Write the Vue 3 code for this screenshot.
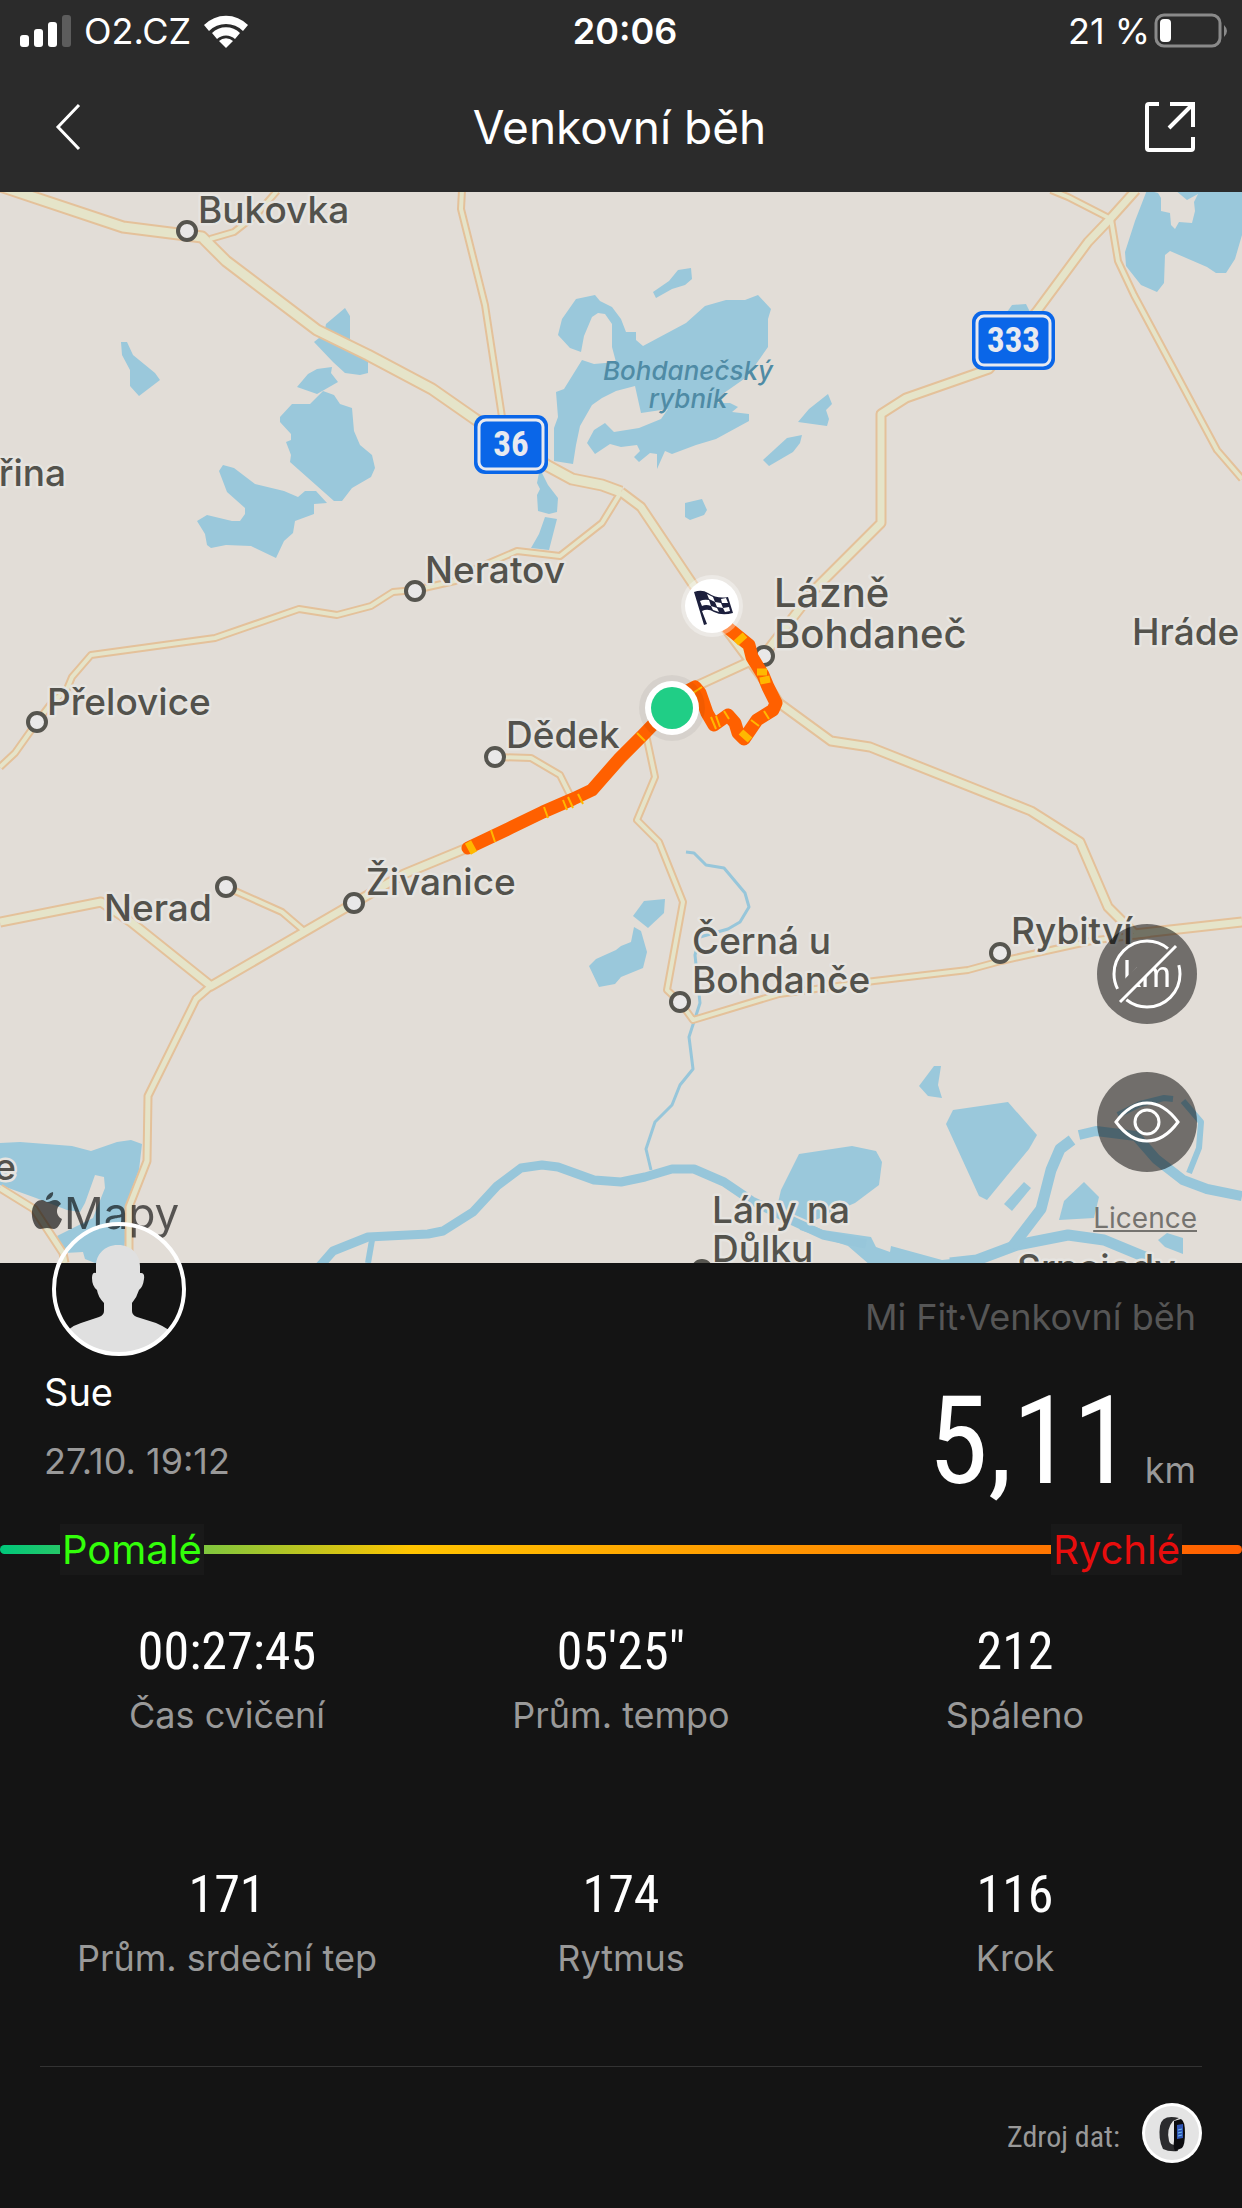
<template>
  <div class="workout">
    <header class="top">
      <div class="status">
        <div class="status__side">
          <svg
            class="signal"
            viewBox="0 0 52 34"
          >
            <rect x="0" y="21" width="9" height="12" rx="3" />
            <rect x="14" y="15" width="9" height="18" rx="3" />
            <rect x="28" y="8" width="9" height="25" rx="3" />
            <rect x="42" y="1" width="9" height="32" rx="3" class="signal__off" />
          </svg>
          <span>O2.CZ</span>
          <svg
            class="wifi"
            viewBox="0 0 46 34"
          >
            <path d="M1 11 A31 31 0 0 1 45 11 L40 17 A24 24 0 0 0 6 17 Z" />
            <path d="M9 19 A20 20 0 0 1 37 19 L32 25 A13 13 0 0 0 14 25 Z" />
            <path d="M16 27 A10 10 0 0 1 30 27 L23 34 Z" />
          </svg>
        </div>
        <strong class="status__time">20:06</strong>
        <div class="status__side status__side--right">
          <span>21 %</span>
          <svg
            class="battery"
            viewBox="0 0 76 36"
          >
            <rect x="2" y="2" width="64" height="31" rx="8" class="battery__case" />
            <rect x="6" y="6" width="11" height="23" rx="4" fill="#fff" />
            <path d="M70 12 q6 6 0 12 z" fill="#8a8a8a" />
          </svg>
        </div>
      </div>
      <nav class="nav">
        <button
          class="nav__button"
          aria-label="Zpět"
        >
          <svg viewBox="0 0 50 50">
            <path d="M35 3 L14 25 L35 47" />
          </svg>
        </button>
        <h1>Venkovní běh</h1>
        <button
          class="nav__button"
          aria-label="Sdílet"
        >
          <svg viewBox="0 0 50 50">
            <path
              d="M14 2 H4 Q2 2 2 4 V46 Q2 48 4 48 H46 Q48 48 48 46 V35 M25 2 H48 V25 M47 3 L24 26"
              stroke-width="4"
            />
          </svg>
        </button>
      </nav>
    </header>

    <section class="map">
      <svg
        class="map__canvas"
        viewBox="0 192 1242 1071"
      >
        <g class="water">
          <polygon
            v-for="points in lakes"
            :key="points"
            :points="points"
          />
        </g>
        <polyline
          v-for="river in rivers"
          :key="river.points"
          :points="river.points"
          :stroke-width="river.width"
          class="river"
        />
        <polyline
          v-for="road in roads"
          :key="'c' + road.points"
          :points="road.points"
          :stroke-width="road.width + 4"
          class="road road--casing"
        />
        <polyline
          v-for="road in roads"
          :key="'r' + road.points"
          :points="road.points"
          :stroke-width="road.width"
          class="road"
        />

        <circle
          v-for="[x, y] in towns"
          :key="x + '-' + y"
          :cx="x"
          :cy="y"
          r="9"
          class="town"
        />
        <text
          v-for="label in labels"
          :key="label.text"
          :x="label.x"
          :y="label.y"
          :class="['label', label.kind && 'label--' + label.kind]"
        >{{ label.text }}</text>

        <g
          v-for="shield in shields"
          :key="shield.text"
        >
          <rect :x="shield.x" :y="shield.y" :width="shield.width" height="59" rx="11" fill="#0a66e8" />
          <rect
            :x="shield.x + 5"
            :y="shield.y + 5"
            :width="shield.width - 10"
            height="49"
            rx="7"
            class="shield__line"
          />
          <text
            :x="shield.x + shield.width / 2"
            :y="shield.y + 41"
            class="shield__text"
          >{{ shield.text }}</text>
        </g>

        <polyline
          v-for="points in track"
          :key="points"
          :points="points"
          class="track"
        />
        <path
          d="M468 842 L474 853 M736 643 L745 635 M757 672 L767 672 M760 681 L770 679 M741 732 L750 740"
          class="track__slow"
        />
        <path
          d="M491 830 L495 842 M544 807 L548 818 M563 800 L567 810 M568 797 L573 808 M578 794 L583 804 M637 733 L645 741 M693 693 L702 687 M711 717 L716 729 M716 716 L720 727 M724 711 L729 719 M751 720 L759 726 M764 711 L769 719"
          class="track__slow track__slow--thin"
        />

        <circle cx="672" cy="708" r="33" fill="#000" opacity=".05" />
        <circle cx="672" cy="708" r="27" fill="#fff" />
        <circle cx="672" cy="708" r="21" fill="#20ce86" />

        <circle cx="712" cy="606" r="31" fill="#fff" opacity=".35" />
        <circle cx="712" cy="606" r="27" fill="#fff" />
        <g fill="#1c1f3c">
          <path d="M694 592 Q702 589 708 593 Q717 599 728 597 L733 613 Q722 616 714 612 Q708 608 702 611 L707 624 L704 625 Z" />
          <g fill="#fff">
            <path d="M707 594 L713 597 L715 602 L709 599 Z" />
            <path d="M700 601 Q704 599 709 600 L711 606 Q706 604 702 606 Z" />
            <path d="M715 602 L721 603 L723 608 L717 607 Z" />
            <path d="M721 599 L726 598 L728 603 L722 603 Z" />
            <path d="M711 606 L717 608 L719 612 L713 610 Z" />
            <path d="M723 608 L729 607 L730 611 L725 612 Z" />
          </g>
        </g>

        <g class="brand">
          <path d="M47 1202 C50 1202 52 1200 55 1200 C58 1200 60 1202 61 1204 C55 1208 56 1216 62 1219 C60 1225 57 1229 54 1229 C51 1229 50 1228 47 1228 C44 1228 43 1229 40 1229 C35 1229 31 1219 32 1211 C33 1203 38 1200 42 1200 C44 1200 46 1202 47 1202 Z M46 1200 C46 1196 49 1193 53 1192 C54 1196 50 1200 46 1200 Z" />
          <text x="64" y="1229">Mapy</text>
        </g>
      </svg>

      <div class="map__tools">
        <button
          class="tool"
          aria-label="Skrýt kilometry"
        >
          <svg viewBox="0 0 100 100">
            <mask id="slash">
              <rect width="100" height="100" fill="#fff" />
              <path d="M18 74 L75 17" stroke="#000" stroke-width="13" />
            </mask>
            <circle cx="50" cy="50" r="33" stroke-dasharray="90 14 90 20" stroke-dashoffset="16" />
            <g mask="url(#slash)">
              <text x="50" y="63">km</text>
            </g>
            <path d="M23 78 L79 22" />
          </svg>
        </button>
        <button
          class="tool"
          aria-label="Zobrazení mapy"
        >
          <svg viewBox="0 0 100 100">
            <path d="M19 50 Q33 31 50 31 Q67 31 81 50 Q67 69 50 69 Q33 69 19 50 Z" />
            <circle cx="50" cy="50" r="12" />
          </svg>
        </button>
        <a
          href="#"
          class="map__licence"
        >Licence</a>
      </div>
    </section>

    <section class="summary">
      <div class="summary__user">
        <svg
          class="avatar"
          viewBox="0 0 136 136"
        >
          <path
            d="M67 24 C81 24 89 34 89 45 V52 Q94 51 93 58 Q92 66 88 69 Q86 76 81 82 V90 Q81 94 86 96 L105 102 Q112 105 118 109 A64 64 0 0 1 17 109 Q23 104 30 102 L48 96 Q53 94 53 90 V82 Q47 76 46 69 Q41 65 41 57 Q41 51 45 52 V45 C45 34 53 24 67 24 Z"
            fill="#e0e0e0"
          />
          <circle cx="68" cy="68" r="65" />
        </svg>
        <p class="summary__name">Sue</p>
        <time class="summary__date">27.10. 19:12</time>
      </div>
      <div class="summary__result">
        <p class="summary__source">Mi Fit·Venkovní běh</p>
        <p class="distance">
          <span class="distance__value">5,11</span>
          <span>km</span>
        </p>
      </div>
    </section>

    <div class="pace">
      <span class="pace__label pace__label--slow">Pomalé</span>
      <span class="pace__label pace__label--fast">Rychlé</span>
    </div>

    <dl class="stats">
      <div
        v-for="stat in stats"
        :key="stat.name"
        class="stat"
      >
        <dt>{{ stat.name }}</dt>
        <dd>{{ stat.value }}</dd>
      </div>
    </dl>

    <footer class="origin">
      <span>Zdroj dat:</span>
      <svg
        class="origin__device"
        viewBox="0 0 60 60"
      >
        <circle cx="30" cy="30" r="30" fill="#fff" />
        <circle cx="30" cy="30" r="27" fill="#e4e4e4" />
        <path
          d="M37 15 Q20 11 18 23 Q16 36 21 46 Q27 49 36 48 L34 42 Q28 42 27 38 Q24 26 31 18 Z"
          fill="#2b2b2d"
        />
        <path d="M32 18 L39 16 Q43 18 43 30 Q43 42 40 45 L33 48 Q31 44 32 38 Z" fill="#0c0c0f" />
        <path d="M35 22 L41 21 V35 L35 36 Z" fill="#2f55b5" />
        <path d="M36 27 L40 26 M36 30 L40 29 M36 33 L40 32" stroke="#6fc3ee" />
      </svg>
    </footer>
  </div>
</template>

<script setup>
const stats = [
  { name: 'Čas cvičení', value: '00:27:45' },
  { name: 'Prům. tempo', value: '05\'25"' },
  { name: 'Spáleno', value: '212' },
  { name: 'Prům. srdeční tep', value: '171' },
  { name: 'Rytmus', value: '174' },
  { name: 'Krok', value: '116' }
]

const labels = [
  { text: 'Bukovka', x: 198, y: 223 },
  { text: 'řina', x: 66, y: 486, kind: 'end' },
  { text: 'Neratov', x: 425, y: 583 },
  { text: 'Přelovice', x: 47, y: 715 },
  { text: 'Dědek', x: 506, y: 748 },
  { text: 'Živanice', x: 366, y: 895 },
  { text: 'Nerad', x: 104, y: 921 },
  { text: 'Lázně', x: 774, y: 607, kind: 'big' },
  { text: 'Bohdaneč', x: 774, y: 648, kind: 'big' },
  { text: 'Hráde', x: 1132, y: 645 },
  { text: 'Černá u', x: 692, y: 954 },
  { text: 'Bohdanče', x: 692, y: 993 },
  { text: 'Rybitví', x: 1011, y: 944 },
  { text: 'Lány na', x: 712, y: 1223 },
  { text: 'Důlku', x: 712, y: 1262 },
  { text: 'Srnojedy', x: 1017, y: 1281 },
  { text: 'e', x: 16, y: 1180, kind: 'end' },
  { text: 'Bohdanečský', x: 688, y: 380, kind: 'water' },
  { text: 'rybník', x: 688, y: 408, kind: 'water' }
]

const shields = [
  { text: '36', x: 474, y: 415, width: 74 },
  { text: '333', x: 972, y: 311, width: 83 }
]

const towns = [
  [187, 231], [415, 591], [37, 722], [495, 757], [226, 887],
  [354, 903], [764, 656], [680, 1002], [1000, 953], [702, 1270]
]

const roads = [
  { width: 4, points: '210,239 234,232 257,214 277,191' },
  { width: 4, points: '462,190 461,209 485,305 502,417' },
  { width: 4, points: '1051,190 1068,197 1109,218' },
  { width: 4, points: '1111,219 1118,261 1134,295 1217,450 1242,479' },
  { width: 4, points: '0,767 15,753 37,722 50,705 67,689 72,677 91,655 215,638 299,609 337,615 371,606 393,592 415,590 455,581 475,569 517,551 560,556 602,523 621,492' },
  { width: 4, points: '226,887 282,912 303,930' },
  { width: 4, points: '495,757 531,758 560,775 570,795' },
  { width: 4, points: '645,730 655,777 637,820 659,842 683,902 667,990 680,1002 693,1020 779,994 874,981 968,970 1001,961 1096,940 1150,934' },
  { width: 5, points: '211,986 196,999 148,1096 147,1161 129,1207 129,1263' },
  { width: 5, points: '0,1188 34,1209 63,1253 65,1263' },
  { width: 7, points: '1136,190 1110,219 1088,242 1037,311 989,369 906,398 881,414 881,523 815,589 764,655 692,688 670,707 592,790 467,848 404,874 354,903 211,986 131,922 101,902 0,922' },
  { width: 7, points: '621,492 641,507 694,586 764,680 779,703 831,741 870,747 1031,811 1080,842 1108,907 1134,933' },
  { width: 7, points: '1134,934 1242,922' },
  { width: 9, points: '0,186 123,227 202,237 226,261 317,330 368,355 432,389 475,419 548,466 572,479 602,485 621,492' }
]

const track = [
  '468,848 510,828 543,812 573,799 592,790 620,758 643,735 670,707',
  '670,700 695,687 700,693 707,713 714,725 728,715 735,723 738,733 744,739 757,720 773,710 776,703 768,687 763,675 752,657 749,645 728,628'
]

const rivers = [
  { width: 9, points: '319,1267 333,1251 368,1237 428,1234 443,1231 473,1212 497,1186 521,1168 542,1165 558,1167 594,1180 621,1182 645,1177 672,1169 694,1169 724,1182 752,1201 795,1222 823,1235 866,1244' },
  { width: 11, points: '950,1263 977,1260 1017,1245 1068,1235 1104,1240 1150,1259' },
  { width: 11, points: '1012,1247 1041,1209 1051,1170 1060,1149 1072,1140' },
  { width: 10, points: '1079,1135 1096,1131 1136,1136 1156,1159 1183,1180 1207,1189 1242,1196' },
  { width: 6, points: '1118,1115 1140,1104 1164,1098 1173,1099' },
  { width: 6, points: '1183,1101 1201,1122 1199,1148 1189,1173' },
  { width: 6, points: '372,1240 368,1263' },
  { width: 3, points: '686,852 694,853 706,865 724,868 745,893 749,907 740,922 728,929 700,937 695,955 700,1003 689,1037 693,1069 680,1085 672,1105 655,1122 646,1149 651,1170' }
]

const lakes = [
  '121,342 127,342 133,355 155,373 160,380 139,396 130,386 130,370 122,355',
  '345,308 350,316 350,340 368,362 368,373 360,375 345,373 333,362 314,342 324,334 326,324',
  '332,367 331,373 338,382 317,394 297,387 308,374 317,369',
  '323,391 334,395 340,404 352,408 354,431 360,445 372,455 375,468 371,477 352,488 342,501 334,501 290,462 291,455 286,442 291,440 291,434 280,422 280,417 292,404 310,404',
  '223,465 234,468 255,484 284,491 298,497 305,491 316,491 327,503 314,504 314,514 295,521 293,533 284,541 276,558 251,546 226,545 211,548 207,545 205,534 197,521 207,515 232,521 240,521 245,514 245,508 227,492 219,471',
  '558,335 562,319 576,299 595,295 600,301 612,307 621,319 626,332 636,332 636,340 643,346 686,323 705,306 726,300 745,300 758,295 771,309 768,319 768,347 754,367 744,379 724,393 716,403 730,403 738,407 732,412 749,414 749,421 716,439 696,445 672,454 665,451 657,469 657,454 650,453 639,462 634,457 640,451 637,445 621,447 610,444 595,454 587,443 594,430 605,423 614,432 639,428 661,419 668,409 641,413 635,386 616,391 602,398 592,405 580,426 576,445 573,464 554,461 554,428 558,417 556,392 564,389 582,360 594,364 616,362 612,347 612,324 605,314 598,313 592,317 584,336 581,352 570,348',
  '539,473 542,473 548,485 558,498 557,512 549,514 538,511 537,495 540,489 537,483',
  '545,517 557,519 549,550 531,548 539,534',
  '653,292 669,281 678,270 691,268 692,279 685,285 672,289 656,298',
  '828,394 832,404 826,410 829,419 827,426 798,422 809,409',
  '802,435 800,443 793,452 769,466 763,460 787,438',
  '685,503 702,499 707,510 704,515 690,520 685,517',
  '1007,312 1012,305 1026,304 1030,312',
  '1147,190 1158,193 1161,198 1161,211 1170,213 1171,225 1175,229 1179,222 1192,223 1195,211 1194,202 1198,194 1187,200 1175,190 1242,190 1242,235 1235,259 1226,273 1216,273 1207,267 1170,251 1165,255 1164,283 1157,292 1141,285 1126,266 1125,252 1135,221',
  '0,1143 20,1142 72,1146 91,1151 117,1142 131,1140 142,1144 139,1170 129,1196 123,1263 95,1263 85,1259 83,1252 65,1253 57,1236 93,1218 105,1188 104,1177 95,1175 85,1203 80,1212 67,1210 36,1198 0,1185',
  '633,916 644,901 665,899 664,913 648,928',
  '634,927 641,931 647,952 643,968 621,977 615,984 599,987 589,966 596,959 616,950 621,946 631,942',
  '934,1066 941,1066 938,1085 942,1098 928,1096 919,1086',
  '953,1110 1008,1102 1037,1135 1029,1149 987,1200 979,1196 946,1124',
  '799,1154 852,1146 876,1151 882,1162 879,1185 855,1203 811,1222 777,1207 781,1190',
  '1024,1182 1031,1188 1012,1211 1004,1204',
  '1084,1182 1099,1197 1094,1218 1059,1220 1064,1201',
  '1167,1233 1183,1238 1183,1254 1165,1247 1158,1240',
  '795,1218 823,1230 871,1237 876,1247 890,1252 891,1246 942,1260 980,1256 980,1265 870,1265 848,1246 800,1230'
]
</script>

<style>
body {
  margin: 0;
  background: #141414;
}
</style>

<style scoped>
.workout {
  font-family: Inter, 'Liberation Sans', sans-serif;
  font-size: 36px;
  line-height: 44px;
  color: #999;
}
.workout p,
.workout h1,
.workout dl,
.workout dd {
  margin: 0;
}
button {
  padding: 0;
  border: 0;
  background: none;
  cursor: pointer;
}

.top {
  background: #2b2b2b;
  color: #fff;
}
.status {
  display: grid;
  grid-template-columns: 1fr auto 1fr;
  align-items: center;
  height: 62px;
  padding: 0 12px 0 20px;
}
.status__side {
  display: flex;
  align-items: center;
  gap: 12px;
}
.status__side--right {
  justify-content: flex-end;
  gap: 4px;
}
.status__time {
  font-weight: 600;
}
.signal {
  width: 52px;
  height: 34px;
  fill: #fff;
}
.signal__off {
  fill: #5c5c5c;
}
.wifi {
  width: 46px;
  height: 34px;
  fill: #fff;
}
.battery {
  width: 76px;
  height: 36px;
}
.battery__case {
  fill: none;
  stroke: #8a8a8a;
  stroke-width: 3;
}
.nav {
  display: flex;
  align-items: center;
  justify-content: space-between;
  height: 130px;
  padding: 0 47px 0 44px;
}
.nav h1 {
  font-size: 46px;
  font-weight: 400;
}
.nav__button {
  width: 50px;
  height: 50px;
}
.nav__button svg {
  display: block;
  fill: none;
  stroke: #fff;
  stroke-width: 3;
}

.map {
  position: relative;
}
.map__canvas {
  display: block;
  width: 100%;
  background: #e2ddd7;
}
.water {
  fill: #9ac8db;
}
.river {
  fill: none;
  stroke: #97c6da;
  stroke-linejoin: round;
}
.road {
  fill: none;
  stroke: #e5e4c9;
  stroke-linejoin: round;
}
.road--casing {
  stroke: #e4c19a;
}
.town {
  fill: #e9e8e8;
  stroke: #56554f;
  stroke-width: 4;
}
.label {
  font-size: 37px;
  font-weight: 500;
  fill: #53524c;
  stroke: #e6e4e0;
  stroke-width: 5;
  stroke-linejoin: round;
  paint-order: stroke;
}
.label--big {
  font-size: 40px;
}
.label--end {
  text-anchor: end;
}
.label--water {
  font-size: 26px;
  font-style: italic;
  text-anchor: middle;
  fill: #4f8ba5;
  stroke: none;
}
.shield__line {
  fill: none;
  stroke: #e8eaf0;
  stroke-width: 3;
}
.shield__text {
  font-family: 'Roboto Condensed', Roboto, sans-serif;
  font-size: 35px;
  font-weight: 700;
  text-anchor: middle;
  fill: #e8eaf0;
}
.track {
  fill: none;
  stroke: #ff6000;
  stroke-width: 13;
  stroke-linejoin: round;
  stroke-linecap: round;
}
.track__slow {
  fill: none;
  stroke: #ffb800;
  stroke-width: 7;
}
.track__slow--thin {
  stroke-width: 2;
}
.brand {
  font-size: 44px;
  fill: #000;
  opacity: .62;
}
.map__tools {
  position: absolute;
  right: 45px;
  bottom: 28px;
  display: flex;
  flex-direction: column;
  align-items: flex-end;
}
.tool {
  width: 100px;
  height: 100px;
  margin-bottom: 48px;
  border-radius: 50%;
  background: rgba(0, 0, 0, .5);
}
.tool:nth-child(2) {
  margin-bottom: 29px;
}
.tool svg {
  display: block;
  fill: none;
  stroke: #fff;
  stroke-width: 3;
}
.tool text {
  font-size: 36px;
  font-weight: 400;
  text-anchor: middle;
  fill: #fff;
  stroke: none;
}
.map__licence {
  font-size: 28px;
  line-height: 34px;
  color: #75736f;
}

.summary {
  position: relative;
  display: flex;
  justify-content: space-between;
  padding: 0 46px 0 44px;
}
.summary__user {
  margin-top: -42px;
}
.avatar {
  display: block;
  width: 136px;
  height: 136px;
  margin-left: 7px;
}
.avatar circle {
  fill: none;
  stroke: #fff;
  stroke-width: 4;
}
.summary__name {
  padding-top: 13px;
  font-size: 38px;
  color: #fff;
}
.summary__date {
  display: block;
  padding-top: 25px;
}
.summary__result {
  padding-top: 32px;
  text-align: right;
}
.summary__source {
  color: #565656;
}
.distance {
  display: flex;
  align-items: baseline;
  justify-content: flex-end;
  gap: 12px;
  padding-top: 20px;
}
.distance__value {
  font-family: 'Roboto Condensed', 'Liberation Sans Narrow', Roboto, sans-serif;
  font-size: 122px;
  line-height: 165px;
  color: #fff;
}

.pace {
  position: relative;
  display: flex;
  justify-content: space-between;
  padding: 0 60px;
}
.pace::before {
  content: '';
  position: absolute;
  top: 21px;
  left: 0;
  right: 0;
  height: 9px;
  border-radius: 5px;
  background: linear-gradient(90deg, #00c77b, #ffc400 33%, #ff5e00);
}
.pace__label {
  position: relative;
  padding: 0 2px;
  font-size: 40px;
  line-height: 51px;
  background: #191919;
}
.pace__label--slow {
  color: #33ff0a;
}
.pace__label--fast {
  color: #e80d0d;
}

.stats {
  display: grid;
  grid-template-columns: repeat(3, 1fr);
  row-gap: 121px;
  padding: 40px 30px 86px;
}
.stat {
  display: flex;
  flex-direction: column-reverse;
  align-items: center;
}
.stat dd {
  padding-bottom: 4px;
  font-family: 'Roboto Condensed', 'Liberation Sans Narrow', Roboto, sans-serif;
  font-size: 52px;
  line-height: 74px;
  color: #fff;
}

.origin {
  display: flex;
  align-items: center;
  justify-content: flex-end;
  gap: 22px;
  margin: 0 40px;
  padding-top: 36px;
  border-top: 1px solid #333;
  font-family: 'Roboto Condensed', 'Liberation Sans Narrow', Roboto, sans-serif;
  font-size: 30px;
}
.origin span {
  padding-top: 8px;
}
.origin__device {
  width: 60px;
  height: 60px;
}
</style>
